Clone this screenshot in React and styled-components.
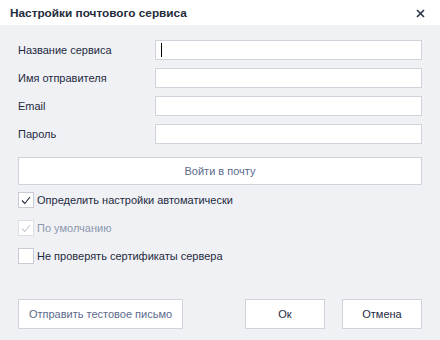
import React from 'react';
import styled, { createGlobalStyle } from 'styled-components';

const Global = createGlobalStyle`
  html, body { margin: 0; padding: 0; background: #f0f1f5; }
  * { box-sizing: border-box; }
`;

const Dialog = styled.div`
  width: 440px;
  height: 340px;
  background: #f0f1f5;
  font-family: "Liberation Sans", Arial, sans-serif;
  font-size: 11px;
  color: #1e2a40;
  display: flex;
  flex-direction: column;
`;

const Header = styled.div`
  height: 25px;
  background: #ffffff;
  display: flex;
  align-items: center;
  justify-content: space-between;
  padding: 1px 15px 0 10px;
`;

const Title = styled.div`
  font-weight: bold;
  font-size: 11.8px;
  color: #1f2d3d;
`;

const Close = styled.svg`
  width: 9px;
  height: 9px;
`;

const Body = styled.div`
  flex: 1;
  display: flex;
  flex-direction: column;
  padding: 15px 18px 11px 18px;
`;

const Fields = styled.div`
  display: grid;
  grid-template-columns: 137px 267px;
  row-gap: 8px;
  align-items: center;
`;

const Label = styled.label`
  line-height: 20px;
`;

const Input = styled.div`
  height: 20px;
  background: #ffffff;
  border: 1px solid #d0d3da;
  position: relative;
`;

const Caret = styled.span`
  position: absolute;
  left: 5px;
  top: 2px;
  width: 1px;
  height: 14px;
  background: #000;
`;

const WideButton = styled.div`
  margin-top: 13px;
  height: 28px;
  width: 404px;
  background: #ffffff;
  border: 1px solid #d0d3da;
  display: flex;
  align-items: center;
  justify-content: center;
  color: #5b6a8c;
`;

const Checks = styled.div`
  margin-top: 7px;
  display: flex;
  flex-direction: column;
  gap: 12px;
`;

const CheckRow = styled.div`
  display: flex;
  align-items: center;
  gap: 3px;
  height: 16px;
  color: ${p => (p.disabled ? '#8d97ab' : '#1e2a40')};
`;

const Box = styled.span`
  width: 16px;
  height: 16px;
  background: #ffffff;
  border: 1px solid ${p => (p.disabled ? '#dcdee4' : '#c9ccd4')};
  display: flex;
  align-items: center;
  justify-content: center;
`;

const Footer = styled.div`
  margin-top: auto;
  display: flex;
  align-items: center;
`;

const FootButton = styled.div`
  height: 30px;
  width: ${p => p.w}px;
  margin-left: ${p => p.ml || 0}px;
  background: #ffffff;
  border: 1px solid #d0d3da;
  display: flex;
  align-items: center;
  justify-content: center;
  white-space: nowrap;
  color: ${p => p.muted ? '#5b6a8c' : '#1e2a40'};
`;

function Check({ checked, disabled, children }) {
  return (
    <CheckRow disabled={disabled}>
      <Box disabled={disabled}>
        {checked && (
          <svg width="10" height="9" viewBox="0 0 10 9">
            <path d="M1 4.5 L3.8 7.5 L9 1" fill="none" stroke={disabled ? '#c5c9d2' : '#1e2a40'} strokeWidth="1.1" />
          </svg>
        )}
      </Box>
      {children}
    </CheckRow>
  );
}

export default function App() {
  return (
    <>
      <Global />
      <Dialog>
        <Header>
          <Title>Настройки почтового сервиса</Title>
          <Close viewBox="0 0 9 9">
            <path d="M1 1 L8 8 M8 1 L1 8" stroke="#2b3445" strokeWidth="1.6" />
          </Close>
        </Header>
        <Body>
          <Fields>
            <Label>Название сервиса</Label>
            <Input><Caret /></Input>
            <Label>Имя отправителя</Label>
            <Input />
            <Label>Email</Label>
            <Input />
            <Label>Пароль</Label>
            <Input />
          </Fields>
          <WideButton>Войти в почту</WideButton>
          <Checks>
            <Check checked>Определить настройки автоматически</Check>
            <Check checked disabled>По умолчанию</Check>
            <Check>Не проверять сертификаты сервера</Check>
          </Checks>
          <Footer>
            <FootButton w={165} muted>Отправить тестовое письмо</FootButton>
            <FootButton w={80} ml={62}>Ок</FootButton>
            <FootButton w={80} ml={17}>Отмена</FootButton>
          </Footer>
        </Body>
      </Dialog>
    </>
  );
}
